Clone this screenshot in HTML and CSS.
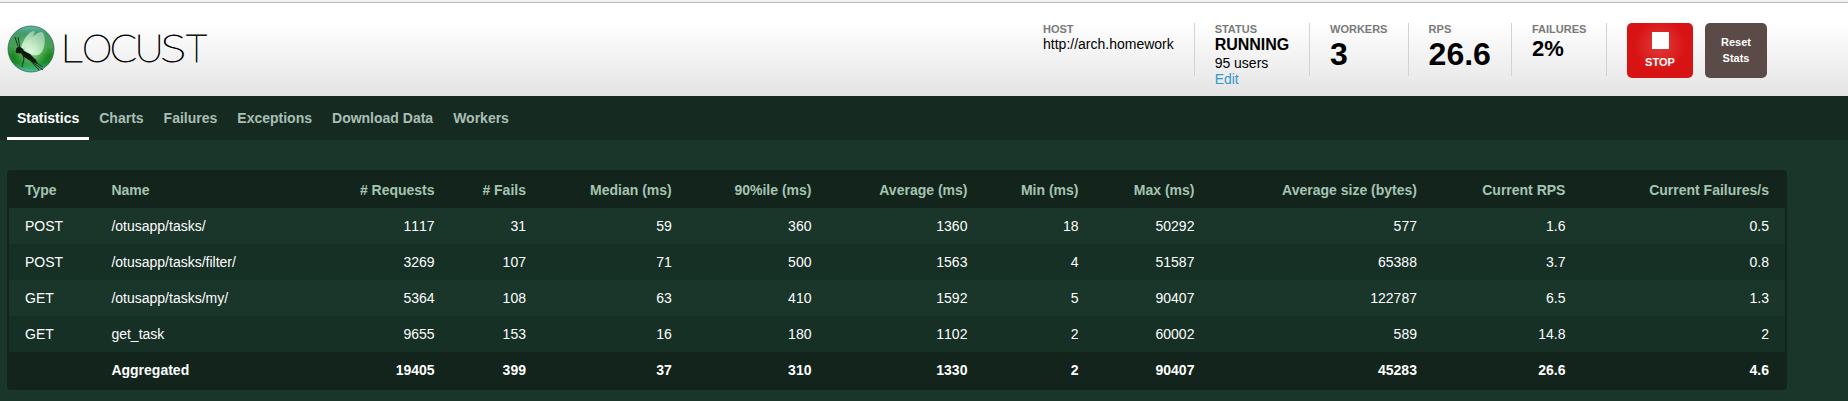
FILE: index.html
```html
<!DOCTYPE html>
<html lang="en">
<head>
<meta charset="utf-8">
<title>Locust</title>
<link rel="stylesheet" href="styles.css">
</head>
<body>
<header class="top">
  <svg class="logo" width="210" height="60" viewBox="0 18 210 60" role="img" aria-label="Locust">
    <defs>
      <linearGradient id="ball" x1="0" y1="0" x2="0" y2="1">
        <stop offset="0" stop-color="#5fb9b4"/><stop offset=".15" stop-color="#459c6c"/><stop offset=".45" stop-color="#45a04f"/><stop offset=".65" stop-color="#1b861f"/><stop offset=".8" stop-color="#1a8a2c"/><stop offset="1" stop-color="#4fc5a4"/>
      </linearGradient>
      <radialGradient id="glow" cx=".5" cy=".55" r=".4">
        <stop offset="0" stop-color="#c5f5c0" stop-opacity=".9"/><stop offset="1" stop-color="#7fd67f" stop-opacity="0"/>
      </radialGradient>
      <linearGradient id="wing" x1="1" y1="0" x2="0" y2="1">
        <stop offset="0" stop-color="#d8f3dc" stop-opacity=".5"/><stop offset="1" stop-color="#f0fff0" stop-opacity=".8"/>
      </linearGradient>
    </defs>
    <circle cx="31" cy="49" r="23" fill="url(#ball)" stroke="#2f6650" stroke-width=".8"/>
    <circle cx="31" cy="49" r="22" fill="url(#glow)"/>
    <path d="M21 48C23 40 29 31 34 31C37 32 30 41 24 49Z" fill="url(#wing)"/>
    <path d="M24 50C28 40 37 31 42 32C47 36 45 53 38 55C34 56 29 54 24 50Z" fill="url(#wing)"/>
    <path d="M15.500 52L16.500 48L19 46.500L22 48L24 51L30 54L36 60L38 64L32 62L24 57L21 53.500L16.500 53Z" fill="#0e1a10"/>
    <path d="M18.500 48L15 37M20 48L18 37M22.500 54L24 59L22 67M29 59L39 70M31 61L43 70M35 62L43 67" fill="none" stroke="#14281a" stroke-width=".9"/>
    <g class="wordmark">
      <text transform="translate(60.2 61.5) scale(1.21 1)">L</text>
      <text transform="translate(82.1 61.5) scale(1.045 1)">O</text>
      <text transform="translate(109.8 61.5) scale(1.085 1)">C</text>
      <text transform="translate(134.4 61.5) scale(1.1 1)">U</text>
      <text transform="translate(160 61.5) scale(1.35 1)">S</text>
      <text transform="translate(186 61.5)">T</text>
    </g>
  </svg>
  <div class="stats">
    <div class="box host"><span class="label">HOST</span><span class="line">http://arch.homework</span></div>
    <div class="box status"><span class="label">STATUS</span><b class="state">RUNNING</b><span class="line">95 users</span><a class="line edit">Edit</a></div>
    <div class="box workers"><span class="label">WORKERS</span><b class="big">3</b></div>
    <div class="box rps"><span class="label">RPS</span><b class="big">26.6</b></div>
    <div class="box fails"><span class="label">FAILURES</span><b class="mid">2%</b></div>
    <div class="btn stop"><i class="square"></i>STOP</div>
    <div class="btn reset">Reset<br>Stats</div>
  </div>
</header>
<nav class="nav">
  <a class="tab active">Statistics</a><a class="tab">Charts</a><a class="tab">Failures</a><a class="tab">Exceptions</a><a class="tab">Download Data</a><a class="tab">Workers</a>
</nav>
<main class="main">
  <table class="grid">
    <colgroup><col class="c1"><col class="c2"><col class="c2b"><col class="c3"><col class="c4"><col class="c5"><col class="c6"><col class="c7"><col class="c8"><col class="c9"><col class="c10"><col class="c11"></colgroup>
    <thead><tr><th>Type</th><th>Name</th><th># Requests</th><th># Fails</th><th>Median (ms)</th><th>90%ile (ms)</th><th>Average (ms)</th><th>Min (ms)</th><th>Max (ms)</th><th>Average size (bytes)</th><th>Current RPS</th><th>Current Failures/s</th></tr></thead>
    <tbody>
      <tr><td>POST</td><td>/otusapp/tasks/</td><td>1117</td><td>31</td><td>59</td><td>360</td><td>1360</td><td>18</td><td>50292</td><td>577</td><td>1.6</td><td>0.5</td></tr>
      <tr><td>POST</td><td>/otusapp/tasks/filter/</td><td>3269</td><td>107</td><td>71</td><td>500</td><td>1563</td><td>4</td><td>51587</td><td>65388</td><td>3.7</td><td>0.8</td></tr>
      <tr><td>GET</td><td>/otusapp/tasks/my/</td><td>5364</td><td>108</td><td>63</td><td>410</td><td>1592</td><td>5</td><td>90407</td><td>122787</td><td>6.5</td><td>1.3</td></tr>
      <tr><td>GET</td><td>get_task</td><td>9655</td><td>153</td><td>16</td><td>180</td><td>1102</td><td>2</td><td>60002</td><td>589</td><td>14.8</td><td>2</td></tr>
      <tr class="total"><td></td><td>Aggregated</td><td>19405</td><td>399</td><td>37</td><td>310</td><td>1330</td><td>2</td><td>90407</td><td>45283</td><td>26.6</td><td>4.6</td></tr>
    </tbody>
  </table>
</main>
</body>
</html>
```
FILE: styles.css
```css
* { box-sizing: border-box; }
html { height: 100%; background: #1a352a; }
body { margin: 0; height: 401px; overflow: hidden; font: 14px/16px "Liberation Sans", Arial, sans-serif; background: #1a352a; border-top: 2px solid #f2f2f2; }
.top { height: 94px; border-top: 1px solid #b8b8b8; background: linear-gradient(#fff 20%, #e4e4e4); display: flex; justify-content: space-between; padding: 15px 81px 0 0; }
.logo { display: block; flex: none; }
.wordmark { font-family: Lato, sans-serif; font-weight: 100; font-size: 37px; fill: #000; stroke: #000; stroke-width: .8px; }
.stats { display: flex; padding-top: 5px; color: #000; }
.box { height: 53px; border-right: 1px solid #d2d2d2; padding-left: 20px; display: flex; flex-direction: column; }
.host { width: 171.6px; }
.status { width: 115.4px; }
.workers { width: 98.6px; }
.rps { width: 103.4px; }
.fails { width: 95px; }
.label { font: bold 11px/13px "Liberation Sans", Arial, sans-serif; color: #7a7a7a; }
.line { line-height: 16px; flex: none; }
.state { font-size: 16px; line-height: 18px; margin-bottom: 1px; }
.edit { color: #3a96c8; }
.big { font-size: 32px; line-height: 36px; }
.mid { font-size: 22px; line-height: 26px; }
.btn { height: 55px; border-radius: 5px; color: #fff; font-weight: bold; font-size: 11px; line-height: 16px; display: flex; flex-direction: column; align-items: center; text-align: center; }
.stop { width: 66px; margin-left: 20px; padding-top: 9px; background: radial-gradient(circle at 50% 40%, #e03c3c, #d81313 26px); }
.square { width: 17px; height: 17px; background: #fff; margin-bottom: 5px; }
.reset { width: 62px; margin-left: 12px; background: #5a4a48; display: block; padding-top: 11px; }
.nav { height: 44px; background: #152b22; display: flex; padding-left: 7px; }
.tab { padding: 14px 10px 0; font-weight: bold; color: #aabfb4; }
.active { color: #fff; border-bottom: 3px solid #fff; }
.main { padding: 30px 0 0 7px; }
.grid { width: 1780px; table-layout: fixed; border-collapse: separate; border-spacing: 0; border: 2px solid #12241c; border-radius: 4px; background: #12241c; color: #fff; }
.grid th, .grid td { height: 36px; padding: 0 16px; text-align: right; white-space: nowrap; }
.grid th { color: #a5c4b1; }
.grid th:nth-child(-n+2), .grid td:nth-child(-n+2) { text-align: left; }
.grid td { background: #1a352a; font-kerning: none; }
.grid tr:nth-child(even) td { background: #163026; }
.grid .total td { background: #12241c; font-weight: bold; }
.c1 { width: 86.4px; }
.c2 { width: 200px; }
.c2b { width: 155.2px; }
.c3 { width: 91.4px; }
.c4 { width: 145.8px; }
.c5 { width: 139.7px; }
.c6 { width: 156px; }
.c7 { width: 111px; }
.c8 { width: 116px; }
.c9 { width: 222.5px; }
.c10 { width: 148.500px; }
.c11 { width: 203.500px; }
```
